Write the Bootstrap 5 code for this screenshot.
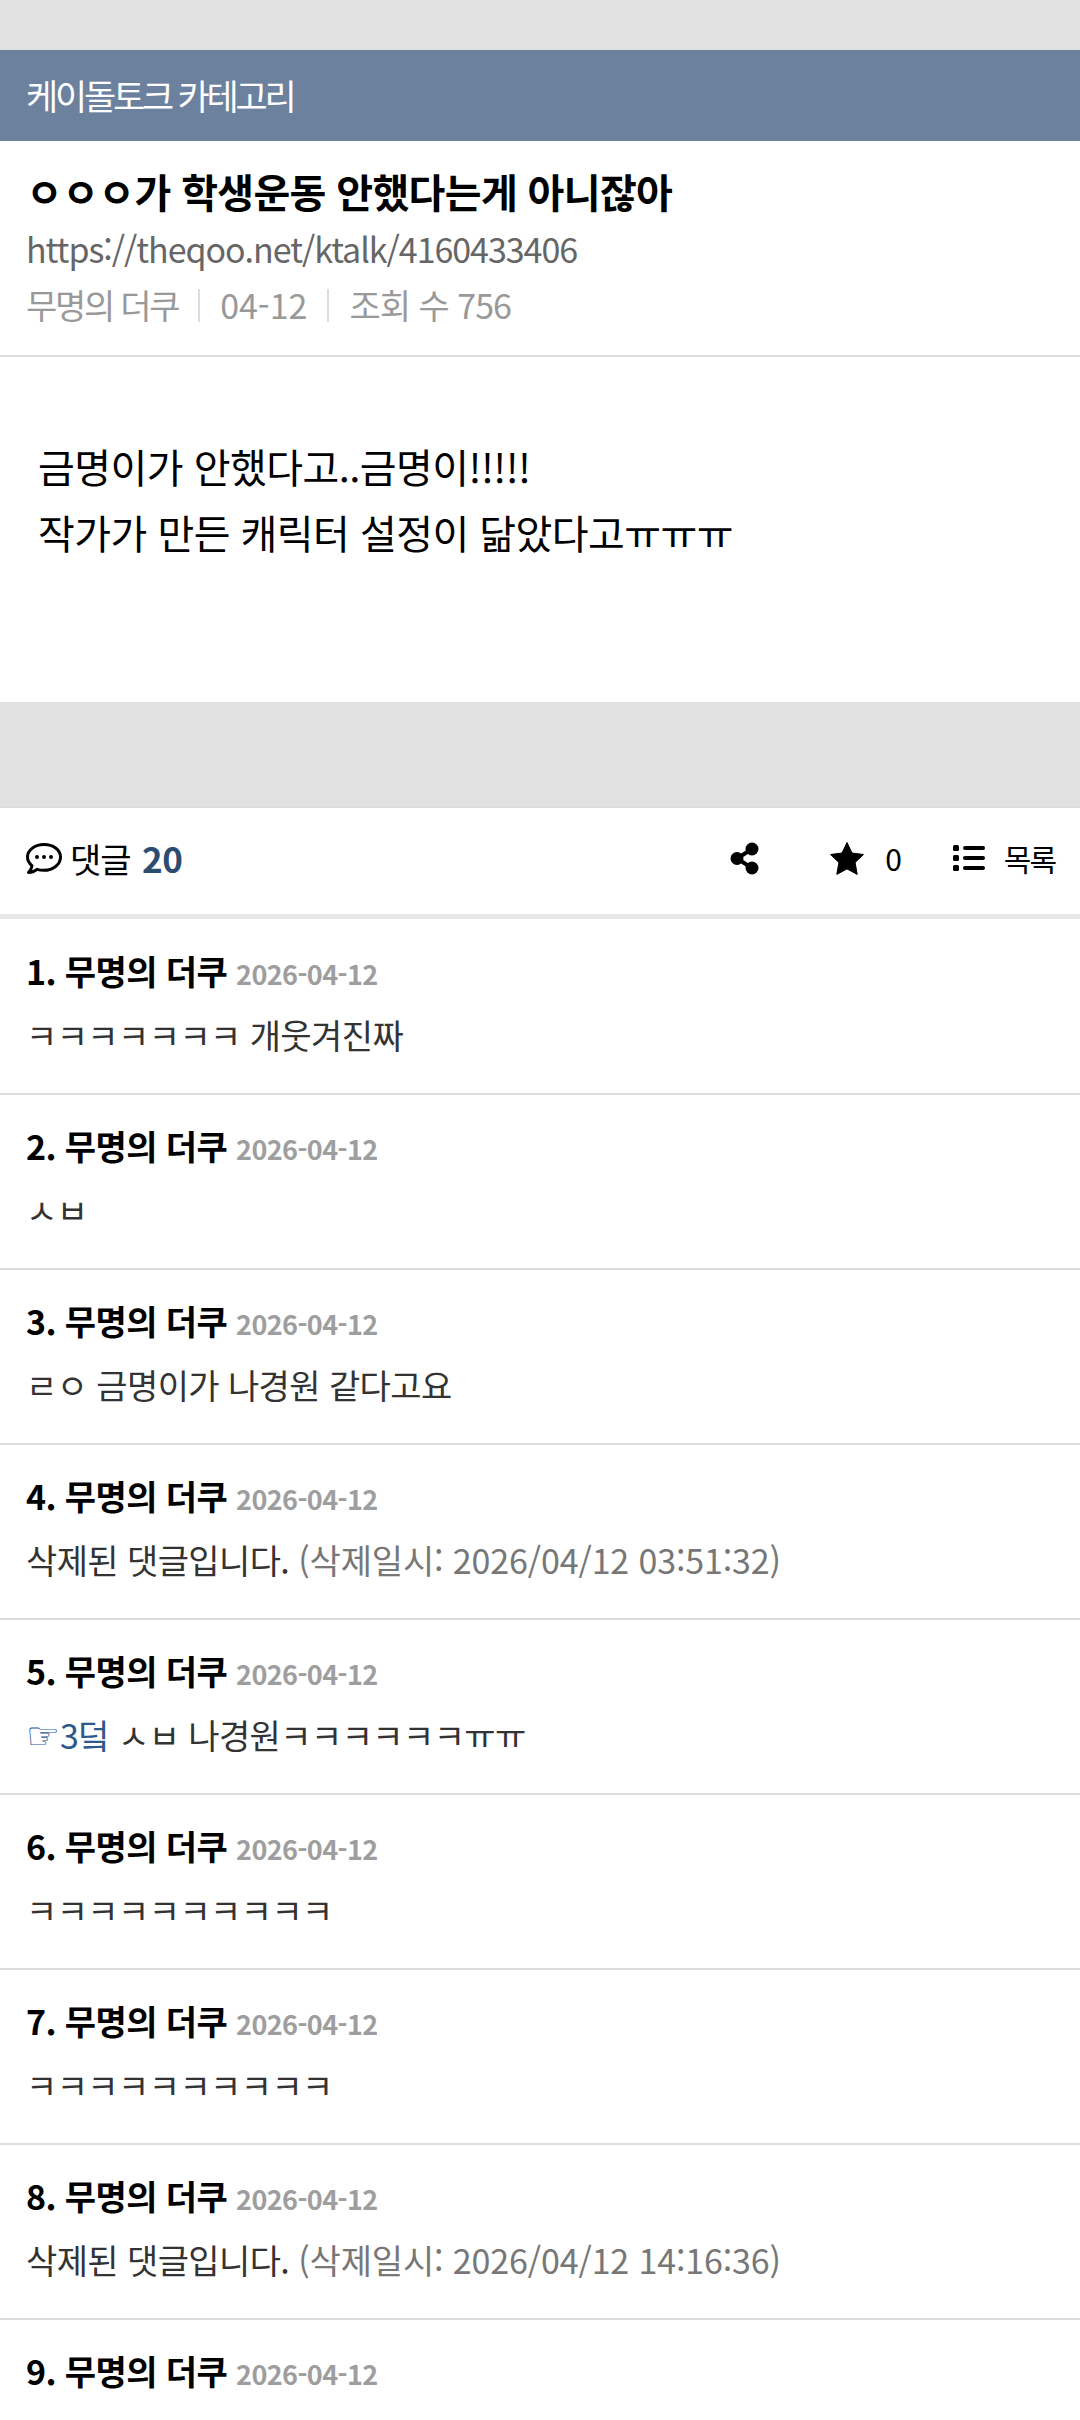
<!DOCTYPE html>
<html lang="ko">
<head>
  <meta charset="UTF-8" />
  <meta name="viewport" content="width=device-width, initial-scale=1" />
  <title>케이돌토크 카테고리</title>
  <link href="https://cdn.jsdelivr.net/npm/bootstrap@5.3.2/dist/css/bootstrap.min.css" rel="stylesheet" />
  <style>
    body {
      background: #fff;
      color: #000;
      font-family: "Noto Sans CJK KR", "Noto Sans", sans-serif;
    }
    .gray-gap { background: #e1e1e1; }
    .gap-top { height: 50px; }
    .gap-mid { height: 106px; border-bottom: 1px solid #dcdcdc; }
    .cate-bar {
      background: #6b819e;
      color: #fff;
      height: 91px;
      padding: 0 26px;
      font-size: 35px;
      letter-spacing: -3.2px;
    }
    .post-head { height: 216px; padding: 21px 26px 0; border-bottom: 2px solid #ddd; }
    .post-title { font-size: 40px; font-weight: 700; line-height: 59px; letter-spacing: -.65px; margin: 0; }
    .post-url { font-size: 34px; line-height: 56px; color: #666; letter-spacing: -1.05px; }
    .post-meta { font-size: 34px; line-height: 56px; color: #999; letter-spacing: -1px; }
    .meta-name { letter-spacing: -2.3px; }
    .meta-date { letter-spacing: 0; }
    .meta-sep { width: 2px; height: 33px; background: #ddd; margin: 0 20px; }
    .post-body { height: 345px; padding: 76px 38px 0; font-size: 40px; line-height: 66px; letter-spacing: -.55px; }
    .cmt-bar { height: 106px; padding: 0 25px 6px 26px; font-size: 34px; }
    .cmt-label { letter-spacing: -1px; }
    .cmt-total { color: #2c4d70; font-weight: 700; font-size: 35px; letter-spacing: -.5px; margin-left: 3px; }
    .cmt-tools { font-size: 30px; }
    .tool-share { margin-right: 71px; }
    .tool-star { margin-right: 21px; }
    .tool-count { margin-right: 51px; }
    .tool-list { margin-right: 19px; }
    .tool-label { letter-spacing: -2px; }
    .cmt-list { border-top: 5px solid #e7e7e7; padding-top: 1px; }
    .cmt-item { height: 175px; padding: 26px 26px 0; border-bottom: 2px solid #ddd; }
    .cmt-name { font-size: 34px; font-weight: 700; line-height: 50px; letter-spacing: -.6px; }
    .cmt-date { font-size: 27px; font-weight: 700; color: #9e9e9e; letter-spacing: -.6px; }
    .cmt-text { font-size: 34px; line-height: 50px; margin-top: 11px; color: #333; letter-spacing: -.6px; }
    .cmt-del { color: #777; letter-spacing: -.14px; }
    .cmt-link { color: #2c5a8c; text-decoration: none; }
    .hand { font-family: "DejaVu Sans", sans-serif; font-size: 38px; letter-spacing: 0; }
  </style>
</head>
<body>
  <div class="gray-gap gap-top"></div>
  <div class="cate-bar d-flex align-items-center">케이돌토크 카테고리</div>

  <div class="post-head">
    <h1 class="post-title">ㅇㅇㅇ가 학생운동 안했다는게 아니잖아</h1>
    <div class="post-url">https://theqoo.net/ktalk/4160433406</div>
    <div class="post-meta d-flex align-items-center">
      <span class="meta-name">무명의 더쿠</span><span class="meta-sep"></span><span class="meta-date">04-12</span><span class="meta-sep"></span><span>조회 수 756</span>
    </div>
  </div>

  <div class="post-body">
    <div>금명이가 안했다고..금명이!!!!!</div>
    <div>작가가 만든 캐릭터 설정이 닮았다고ㅠㅠㅠ</div>
  </div>

  <div class="gray-gap gap-mid"></div>

  <div class="cmt-bar d-flex align-items-center justify-content-between">
    <div class="d-flex align-items-center gap-2">
      <svg width="36" height="31" viewBox="0 0 36 31" fill="none">
        <path d="M18 1.500C9 1.500 1.500 7 1.500 14c0 3.400 1.700 6.400 4.500 8.700-.4 2.700-1.900 5-3.500 6.800 3.300 0 6.300-1.400 8.500-3.200 2 .7 4.200 1 7 1 9 0 16.500-5.800 16.500-13.300S27 1.500 18 1.500Z" stroke="#000" stroke-width="3" stroke-linejoin="round"/>
        <circle cx="11" cy="14" r="2" fill="#000"/><circle cx="18" cy="14" r="2" fill="#000"/><circle cx="25" cy="14" r="2" fill="#000"/>
      </svg>
      <span class="cmt-label">댓글 <span class="cmt-total">20</span></span>
    </div>
    <div class="cmt-tools d-flex align-items-center">
      <svg class="tool-share" width="29" height="33" viewBox="0 0 29 33">
        <path d="M22 7 7 16.500 22 26" fill="none" stroke="#000" stroke-width="4"/>
        <circle cx="22" cy="7" r="6.500"/><circle cx="7" cy="16.500" r="6.500"/><circle cx="22" cy="26" r="6.500"/>
      </svg>
      <svg class="tool-star" width="34" height="33" viewBox="0 0 34 33">
        <path d="M17 .5l5 10.500 11.500 1.500-8.400 8 2.100 11.900L17 26.900 6.800 32.400l2.100-11.900-8.400-8L12 11Z" stroke="#000" stroke-linejoin="round"/>
      </svg>
      <span class="tool-count">0</span>
      <svg class="tool-list" width="32" height="26" viewBox="0 0 32 26">
        <rect x="0" y="0" width="6" height="6" rx="1.500"/><rect x="0" y="10" width="6" height="6" rx="1.500"/><rect x="0" y="20" width="6" height="6" rx="1.500"/>
        <rect x="10" y="1" width="22" height="4" rx="2"/><rect x="10" y="11" width="22" height="4" rx="2"/><rect x="10" y="21" width="22" height="4" rx="2"/>
      </svg>
      <span class="tool-label">목록</span>
    </div>
  </div>

  <div class="cmt-list">
    <div class="cmt-item">
      <div class="cmt-name">1. 무명의 더쿠 <span class="cmt-date">2026-04-12</span></div>
      <div class="cmt-text">ㅋㅋㅋㅋㅋㅋㅋ 개웃겨진짜</div>
    </div>
    <div class="cmt-item">
      <div class="cmt-name">2. 무명의 더쿠 <span class="cmt-date">2026-04-12</span></div>
      <div class="cmt-text">ㅅㅂ</div>
    </div>
    <div class="cmt-item">
      <div class="cmt-name">3. 무명의 더쿠 <span class="cmt-date">2026-04-12</span></div>
      <div class="cmt-text">ㄹㅇ 금명이가 나경원 같다고요</div>
    </div>
    <div class="cmt-item">
      <div class="cmt-name">4. 무명의 더쿠 <span class="cmt-date">2026-04-12</span></div>
      <div class="cmt-text">삭제된 댓글입니다. <span class="cmt-del">(삭제일시: 2026/04/12 03:51:32)</span></div>
    </div>
    <div class="cmt-item">
      <div class="cmt-name">5. 무명의 더쿠 <span class="cmt-date">2026-04-12</span></div>
      <div class="cmt-text"><a class="cmt-link" href="#"><span class="hand">☞</span>3덬</a> ㅅㅂ 나경원ㅋㅋㅋㅋㅋㅋㅠㅠ</div>
    </div>
    <div class="cmt-item">
      <div class="cmt-name">6. 무명의 더쿠 <span class="cmt-date">2026-04-12</span></div>
      <div class="cmt-text">ㅋㅋㅋㅋㅋㅋㅋㅋㅋㅋ</div>
    </div>
    <div class="cmt-item">
      <div class="cmt-name">7. 무명의 더쿠 <span class="cmt-date">2026-04-12</span></div>
      <div class="cmt-text">ㅋㅋㅋㅋㅋㅋㅋㅋㅋㅋ</div>
    </div>
    <div class="cmt-item">
      <div class="cmt-name">8. 무명의 더쿠 <span class="cmt-date">2026-04-12</span></div>
      <div class="cmt-text">삭제된 댓글입니다. <span class="cmt-del">(삭제일시: 2026/04/12 14:16:36)</span></div>
    </div>
    <div class="cmt-item">
      <div class="cmt-name">9. 무명의 더쿠 <span class="cmt-date">2026-04-12</span></div>
    </div>
  </div>
  <script src="https://cdn.jsdelivr.net/npm/bootstrap@5.3.2/dist/js/bootstrap.bundle.min.js"></script>
</body>
</html>
